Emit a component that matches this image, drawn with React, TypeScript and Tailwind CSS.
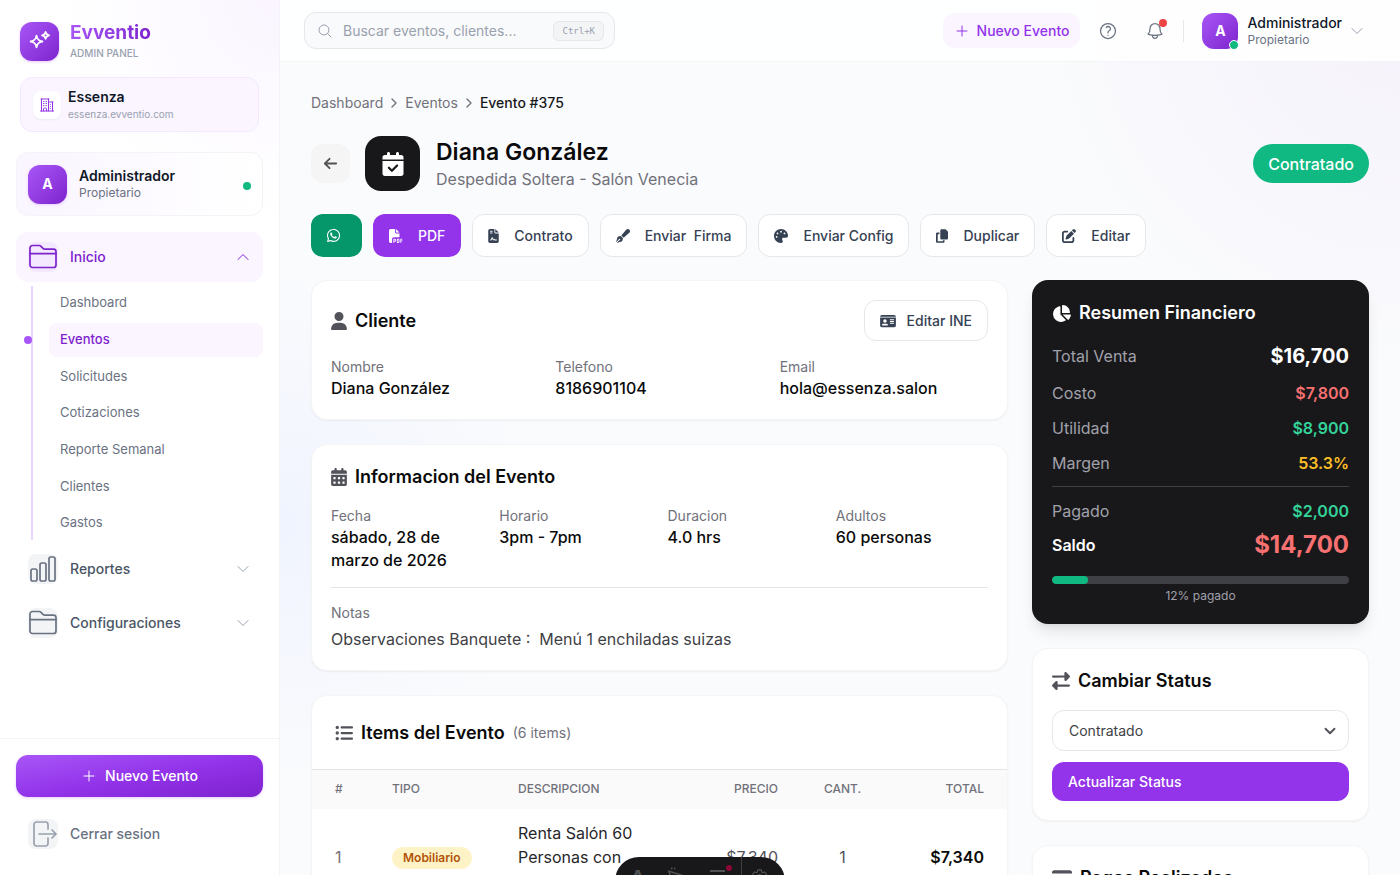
import React, { useState } from 'react';
import {
  FaArrowLeft,
  FaCalendarCheck,
  FaCalendarDays,
  FaChartPie,
  FaCopy,
  FaCreditCard,
  FaFileContract,
  FaFilePdf,
  FaIdCard,
  FaListUl,
  FaPalette,
  FaPenFancy,
  FaPenToSquare,
  FaRightLeft,
  FaUser,
  FaWhatsapp,
} from 'react-icons/fa6';
import {
  HiOutlineBell,
  HiOutlineBuildingOffice2,
  HiOutlineChevronDown,
  HiOutlineChevronUp,
  HiOutlineCog6Tooth,
  HiOutlineMagnifyingGlass,
  HiOutlinePlus,
  HiOutlineQuestionMarkCircle,
} from 'react-icons/hi2';
import { ChevronDown, ChevronRight } from 'lucide-react';

type Field = { label: string; value: string };
type Item = { id: number; type: string; description: string; price: string; qty: number; total: string };

const submenu = ['Dashboard', 'Eventos', 'Solicitudes', 'Cotizaciones', 'Reporte Semanal', 'Clientes', 'Gastos'];

const client: Field[] = [
  { label: 'Nombre', value: 'Diana González' },
  { label: 'Telefono', value: '8186901104' },
  { label: 'Email', value: 'hola@essenza.salon' },
];

const eventInfo: Field[] = [
  { label: 'Fecha', value: 'sábado, 28 de marzo de 2026' },
  { label: 'Horario', value: '3pm - 7pm' },
  { label: 'Duracion', value: '4.0 hrs' },
  { label: 'Adultos', value: '60 personas' },
];

const items: Item[] = [
  { id: 1, type: 'Mobiliario', description: 'Renta Salón 60 Personas con Banquete', price: '$7,340', qty: 1, total: '$7,340' },
];

const paidPercent = 12;

/* Icons that the icon sets do not have */

function LogoIcon() {
  return (
    <svg viewBox="0 0 24 24" className="size-6 text-white" fill="none" stroke="currentColor" strokeWidth="1.8" strokeLinejoin="round">
      <path d="M8.500 6.600c.7 3.900 2 5.200 5.900 5.900-3.900.7-5.200 2-5.900 5.900-.7-3.900-2-5.200-5.900-5.900 3.900-.7 5.200-2 5.900-5.900z" />
      <path d="M17.600 2.800c.4 2.300 1.200 3.100 3.500 3.500-2.300.4-3.100 1.200-3.500 3.500-.4-2.300-1.200-3.100-3.500-3.500 2.300-.4 3.100-1.200 3.500-3.500z" />
    </svg>
  );
}

function FolderIcon() {
  return (
    <svg viewBox="0 0 28 28" className="size-7 shrink-0" fill="none" stroke="currentColor" strokeWidth="1.7" strokeLinecap="round" strokeLinejoin="round">
      <path d="M1 22V5a2.500 2.500 0 0 1 2.500-2.500h6.700a2.500 2.500 0 0 1 1.800.8l2 2a2.500 2.500 0 0 0 1.800.8h8.700A2.500 2.500 0 0 1 27 8.600V22a2.500 2.500 0 0 1-2.500 2.500h-21A2.500 2.500 0 0 1 1 22z" />
      <path d="M1 10.700h26" />
    </svg>
  );
}

function BarsIcon() {
  return (
    <svg viewBox="0 0 28 28" className="size-7 shrink-0" fill="none" stroke="currentColor" strokeWidth="1.7">
      <rect x="2" y="14" width="6" height="12" rx="1.700" />
      <rect x="11" y="8" width="6" height="18" rx="1.700" />
      <rect x="20" y="2" width="6" height="24" rx="1.700" />
    </svg>
  );
}

function LogoutIcon() {
  return (
    <svg viewBox="0 0 28 28" className="size-7 shrink-0" fill="none" stroke="currentColor" strokeWidth="1.7" strokeLinecap="round" strokeLinejoin="round">
      <path d="M19 9V4.500A2.500 2.500 0 0 0 16.500 2h-9A2.500 2.500 0 0 0 5 4.500v19A2.500 2.500 0 0 0 7.500 26h9a2.500 2.500 0 0 0 2.500-2.500V18" />
      <path d="M10 14h17M23 10l4 4-4 4" />
    </svg>
  );
}

function ActionButton({ icon, label }: { icon: React.ReactNode; label: string }) {
  return (
    <button type="button" className="flex h-[43px] items-center gap-[15px] rounded-xl border border-gray-200 bg-white px-[15px] text-sm font-medium text-gray-700">
      {icon}
      <span className="whitespace-pre">{label}</span>
    </button>
  );
}

function FieldList({ fields }: { fields: Field[] }) {
  return (
    <>
      {fields.map((f) => (
        <div key={f.label}>
          <dt className="text-sm text-[#71717a]">{f.label}</dt>
          <dd className="text-base leading-[23px] font-medium text-neutral-950">{f.value}</dd>
        </div>
      ))}
    </>
  );
}

function SummaryRow({ label, value, color }: { label: string; value: string; color: string }) {
  return (
    <div className="flex h-6 items-center justify-between">
      <dt className="text-[#a1a1aa]">{label}</dt>
      <dd className={`font-semibold ${color}`}>{value}</dd>
    </div>
  );
}

function NavGroup({ icon, label }: { icon: React.ReactNode; label: string }) {
  return (
    <button type="button" className="flex h-[50px] w-full items-center gap-3 rounded-xl px-3 text-sm font-medium text-gray-600">
      <span className="flex size-[30px] items-center justify-center rounded-lg bg-gray-100 text-gray-500">{icon}</span>
      {label}
      <HiOutlineChevronDown className="ml-auto size-4 text-gray-400" />
    </button>
  );
}

function Sidebar() {
  return (
    <aside className="flex w-[280px] shrink-0 flex-col border-r border-gray-100 bg-white bg-[radial-gradient(circle_at_100%_0%,#faf5ff_0%,#ffffff_220px)]">
      <div className="flex items-center gap-[11px] px-5 pt-[21px]">
        <span className="flex size-[39px] items-center justify-center rounded-xl bg-linear-to-br from-[#a855f7] to-[#7e22ce] shadow-sm shadow-purple-200">
          <LogoIcon />
        </span>
        <div>
          <div className="bg-linear-to-r from-[#a855f7] to-[#7e22ce] bg-clip-text text-[19px] leading-6 font-bold text-transparent">Evventio</div>
          <div className="text-[10px] leading-4 font-medium text-gray-400">ADMIN PANEL</div>
        </div>
      </div>

      <div className="mx-5 mt-4 flex h-[55px] items-center gap-[7px] rounded-xl border border-purple-100 bg-purple-50 px-3">
        <span className="flex size-7 items-center justify-center rounded-lg bg-white text-[#9333ea] shadow-xs">
          <HiOutlineBuildingOffice2 className="size-4" />
        </span>
        <div>
          <div className="text-sm leading-[18px] font-semibold text-gray-900">Essenza</div>
          <div className="text-[10px] leading-4 text-gray-400">essenza.evventio.com</div>
        </div>
      </div>

      <div className="mx-4 mt-5 flex h-16 items-center gap-3 rounded-xl border border-gray-100 bg-linear-to-r from-purple-50 to-white px-[11px]">
        <span className="flex size-[39px] items-center justify-center rounded-xl bg-linear-to-br from-[#a855f7] to-[#7e22ce] text-sm font-bold text-white shadow-sm shadow-purple-200">A</span>
        <div>
          <div className="text-sm leading-[18px] font-semibold text-gray-900">Administrador</div>
          <div className="text-xs text-gray-500">Propietario</div>
        </div>
        <span className="mt-1 ml-auto size-2 rounded-full bg-[#10b981]" />
      </div>

      <nav className="mx-4 mt-4 flex flex-1 flex-col gap-1">
        <button type="button" className="flex h-[50px] w-full items-center gap-3 rounded-xl bg-purple-50 px-3 text-sm font-medium text-[#7e22ce]">
          <span className="flex size-[30px] items-center justify-center rounded-lg bg-purple-100 text-[#7e22ce]">
            <FolderIcon />
          </span>
          Inicio
          <HiOutlineChevronUp className="ml-auto size-4 text-[#7e22ce]" />
        </button>
        <ul className="ml-[15px] flex h-[254px] flex-col justify-between border-l-2 border-purple-200 pl-4">
          {submenu.map((name) => (
            <li key={name} className="relative">
              {name === 'Eventos' && <span className="absolute top-[13px] -left-[25px] size-2 rounded-full bg-[#a855f7]" />}
              <a
                href="#"
                className={`flex h-[34px] items-center rounded-lg px-[11px] text-[13px] ${name === 'Eventos' ? 'bg-purple-50 font-medium text-[#7e22ce]' : 'text-gray-500'}`}
              >
                {name}
              </a>
            </li>
          ))}
        </ul>
        <NavGroup icon={<BarsIcon />} label="Reportes" />
        <NavGroup icon={<FolderIcon />} label="Configuraciones" />
      </nav>

      <div className="border-t border-gray-100 px-4 pt-4 pb-4">
        <button type="button" className="flex h-[42px] w-full items-center justify-center gap-2 rounded-xl bg-linear-to-br from-[#a855f7] via-[#9333ea] to-[#7e22ce] text-sm font-medium text-white shadow-sm shadow-purple-200">
          <HiOutlinePlus className="size-4" />
          Nuevo Evento
        </button>
        <a href="#" className="mt-3 flex h-[50px] items-center gap-3 px-3 text-sm font-medium text-gray-500">
          <span className="flex size-[30px] items-center justify-center rounded-lg bg-gray-100 text-gray-400">
            <LogoutIcon />
          </span>
          Cerrar sesion
        </a>
      </div>
    </aside>
  );
}

function TopBar() {
  return (
    <header className="flex h-[62px] shrink-0 items-center border-b border-gray-100 bg-white/90 px-6">
      <label className="flex h-[37px] w-[311px] items-center gap-[10px] rounded-xl border border-gray-200 bg-gray-50 pr-[10px] pl-3">
        <HiOutlineMagnifyingGlass className="size-4 text-gray-400" />
        <span className="sr-only">Buscar</span>
        <input type="search" placeholder="Buscar eventos, clientes..." className="h-full min-w-0 flex-1 bg-transparent text-sm outline-none placeholder:text-gray-400" />
        <kbd className="rounded-md border border-gray-200 bg-gray-100 px-2 font-['DejaVu_Sans_Mono',monospace] text-[9px] leading-[18px] text-gray-400">Ctrl+K</kbd>
      </label>

      <div className="ml-auto flex items-center">
        <button type="button" className="flex h-[35px] items-center gap-[7px] rounded-xl bg-purple-50 px-[11px] text-sm font-medium text-[#9333ea]">
          <HiOutlinePlus className="size-4" />
          Nuevo Evento
        </button>
        <button type="button" aria-label="Ayuda" className="ml-[18px] text-gray-500">
          <HiOutlineQuestionMarkCircle className="size-5" />
        </button>
        <button type="button" aria-label="Notificaciones" className="relative ml-[27px] text-gray-500">
          <HiOutlineBell className="size-5" />
          <span className="absolute -top-[2px] -right-[2px] size-2 rounded-full bg-[#ef4444]" />
        </button>
        <span className="mx-[18px] h-[22px] w-px bg-gray-200" />
        <button type="button" className="flex items-center gap-[9px] pr-[11px] text-left">
          <span className="relative flex size-9 items-center justify-center rounded-xl bg-linear-to-br from-[#a855f7] to-[#7e22ce] text-sm font-bold text-white">
            A
            <span className="absolute -right-[1px] -bottom-[1px] size-[10px] rounded-full border border-white bg-[#10b981]" />
          </span>
          <span>
            <span className="block text-sm leading-[18px] font-medium text-gray-900">Administrador</span>
            <span className="block text-xs leading-[15px] text-gray-500">Propietario</span>
          </span>
          <HiOutlineChevronDown className="-ml-[2px] size-4 text-gray-400" />
        </button>
      </div>
    </header>
  );
}

export default function App() {
  const [status, setStatus] = useState('Contratado');

  return (
    <div className="flex h-screen overflow-hidden bg-[#fafbfd] font-['Inter','Liberation_Sans',sans-serif] text-neutral-950 antialiased">
      <Sidebar />

      <div className="flex min-w-0 flex-1 flex-col bg-[radial-gradient(circle_at_100%_0%,#f5f1fb_0%,transparent_360px),radial-gradient(circle_at_0%_60%,#f0f4fe_0%,transparent_260px)]">
        <TopBar />

        <main className="flex-1 overflow-y-auto px-[31px] pt-[31px] [scrollbar-width:none]">
          <nav aria-label="Ruta" className="flex items-center gap-[3px] text-sm text-[#71717a]">
            <a href="#">Dashboard</a>
            <ChevronRight className="size-4" />
            <a href="#">Eventos</a>
            <ChevronRight className="size-4" />
            <span className="font-medium text-[#18181b]">Evento #375</span>
          </nav>

          <div className="mt-[23px] flex items-center">
            <a href="#" aria-label="Volver" className="flex size-[39px] items-center justify-center rounded-xl bg-neutral-100 text-neutral-600">
              <FaArrowLeft className="size-[15px]" />
            </a>
            <span className="ml-[15px] flex size-[55px] items-center justify-center rounded-2xl bg-[#18181b] text-white">
              <FaCalendarCheck className="size-6" />
            </span>
            <div className="ml-4">
              <h1 className="text-[23px] leading-[30px] font-semibold">Diana González</h1>
              <p className="text-base leading-6 text-[#71717a]">Despedida Soltera - Salón Venecia</p>
            </div>
            <span className="ml-auto flex h-[39px] items-center rounded-full bg-[#10b981] px-[15px] text-base font-medium text-white">Contratado</span>
          </div>

          <div className="mt-[23px] flex flex-wrap gap-[11px]">
            <a href="#" aria-label="WhatsApp" className="flex h-[43px] w-[51px] items-center rounded-xl bg-[#059669] px-[15px] text-white">
              <FaWhatsapp className="size-[15px]" />
            </a>
            <button type="button" className="flex h-[43px] items-center gap-[15px] rounded-xl bg-[#9333ea] px-4 text-sm font-medium text-white">
              <FaFilePdf className="size-[14px]" />
              PDF
            </button>
            <ActionButton icon={<FaFileContract className="h-[14px] w-[11px]" />} label="Contrato" />
            <ActionButton icon={<FaPenFancy className="size-[14px]" />} label="Enviar  Firma" />
            <ActionButton icon={<FaPalette className="size-[14px]" />} label="Enviar Config" />
            <ActionButton icon={<FaCopy className="h-[14px] w-3" />} label="Duplicar" />
            <ActionButton icon={<FaPenToSquare className="size-[14px]" />} label="Editar" />
          </div>

          <div className="mt-[23px] flex items-start gap-6">
            <div className="flex min-w-0 flex-1 flex-col gap-6">
              <section className="rounded-2xl border border-neutral-100 bg-white p-[19px] shadow-xs">
                <div className="flex items-center justify-between">
                  <h2 className="flex items-center gap-2 text-lg leading-[26px] font-semibold">
                    <FaUser className="h-[18px] w-4 text-[#52525b]" />
                    Cliente
                  </h2>
                  <button type="button" className="flex h-[41px] items-center gap-[11px] rounded-xl border border-gray-200 bg-white px-[15px] text-sm font-medium text-gray-700">
                    <FaIdCard className="h-[14px] w-4" />
                    Editar INE
                  </button>
                </div>
                <dl className="mt-4 grid grid-cols-3 gap-4">
                  <FieldList fields={client} />
                </dl>
              </section>

              <section className="rounded-2xl border border-neutral-100 bg-white p-[19px] shadow-xs">
                <h2 className="flex items-center gap-2 text-lg leading-[26px] font-semibold">
                  <FaCalendarDays className="h-[18px] w-4 text-[#52525b]" />
                  Informacion del Evento
                </h2>
                <dl className="mt-4 grid grid-cols-4 gap-4">
                  <FieldList fields={eventInfo} />
                </dl>
                <div className="mt-[15px] border-t border-neutral-200 pt-[15px]">
                  <h3 className="text-sm text-[#71717a]">Notas</h3>
                  <p className="mt-1 text-base whitespace-pre-wrap text-[#3f3f46]">{'Observaciones Banquete :  Menú 1 enchiladas suizas'}</p>
                </div>
              </section>

              <section className="overflow-hidden rounded-2xl border border-neutral-100 bg-white shadow-xs">
                <h2 className="flex items-center gap-2 px-[23px] py-6 text-lg leading-[25px] font-semibold">
                  <FaListUl className="size-[18px] text-[#52525b]" />
                  Items del Evento
                  <span className="text-sm font-normal text-[#71717a]">(6 items)</span>
                </h2>
                <table className="w-full table-fixed border-t border-neutral-200">
                  <thead className="bg-neutral-50">
                    <tr className="h-[39px] text-left text-xs text-[#71717a]">
                      <th className="w-[57px] pl-[23px] font-medium">#</th>
                      <th className="w-[126px] px-[23px] font-medium">TIPO</th>
                      <th className="px-[23px] font-medium">DESCRIPCION</th>
                      <th className="w-[89px] pr-[23px] text-right font-medium">PRECIO</th>
                      <th className="w-[83px] text-center font-medium">CANT.</th>
                      <th className="w-[123px] px-[23px] text-right font-medium">TOTAL</th>
                    </tr>
                  </thead>
                  <tbody>
                    {items.map((item) => (
                      <tr key={item.id}>
                        <td className="pl-[23px] text-[#71717a]">{item.id}</td>
                        <td className="pl-[23px]">
                          <span className="inline-block rounded-full bg-[#fef3c7] px-[11px] py-[3px] text-xs font-semibold text-[#b45309]">{item.type}</span>
                        </td>
                        <td className="px-[23px] py-3 text-[#27272a]">{item.description}</td>
                        <td className="pr-[23px] text-right text-[#52525b]">{item.price}</td>
                        <td className="text-center text-[#52525b]">{item.qty}</td>
                        <td className="px-[23px] text-right font-semibold">{item.total}</td>
                      </tr>
                    ))}
                  </tbody>
                </table>
              </section>
            </div>

            <div className="flex w-[337px] shrink-0 flex-col gap-6">
              <section className="rounded-2xl bg-[#18181b] p-5 text-white shadow-lg">
                <h2 className="flex items-center gap-2 text-lg leading-[26px] font-semibold">
                  <FaChartPie className="size-[19px]" />
                  Resumen Financiero
                </h2>
                <dl className="mt-4 flex flex-col gap-[11px]">
                  <div className="flex h-7 items-center justify-between">
                    <dt className="text-[#a1a1aa]">Total Venta</dt>
                    <dd className="text-xl font-bold">$16,700</dd>
                  </div>
                  <SummaryRow label="Costo" value="$7,800" color="text-[#f87171]" />
                  <SummaryRow label="Utilidad" value="$8,900" color="text-[#34d399]" />
                  <SummaryRow label="Margen" value="53.3%" color="text-[#fbbf24]" />
                </dl>
                <dl className="mt-[11px] border-t border-[#3f3f46] pt-3">
                  <SummaryRow label="Pagado" value="$2,000" color="text-[#34d399]" />
                  <div className="mt-[6px] flex h-8 items-center justify-between">
                    <dt className="font-semibold">Saldo</dt>
                    <dd className="text-2xl font-bold text-[#f87171]">$14,700</dd>
                  </div>
                </dl>
                <div className="mt-[15px] h-2 overflow-hidden rounded-full bg-[#3f3f46]">
                  <div className="h-full rounded-full bg-[#10b981]" style={{ width: `${paidPercent}%` }} />
                </div>
                <p className="mt-1 text-center text-xs text-[#a1a1aa]">{paidPercent}% pagado</p>
              </section>

              <section className="rounded-2xl border border-neutral-100 bg-white p-[19px] shadow-xs">
                <h2 className="flex items-center gap-2 text-lg leading-[26px] font-semibold">
                  <FaRightLeft className="size-[18px] text-[#52525b]" />
                  Cambiar Status
                </h2>
                <div className="relative mt-4">
                  <select
                    aria-label="Status"
                    value={status}
                    onChange={(e) => setStatus(e.target.value)}
                    className="h-[41px] w-full appearance-none rounded-xl border border-gray-200 bg-white px-4 text-sm text-[#3f3f46]"
                  >
                    <option>Contratado</option>
                    <option>Cancelado</option>
                  </select>
                  <ChevronDown className="pointer-events-none absolute top-3 right-[10px] size-[18px] text-[#52525b]" strokeWidth={2.5} />
                </div>
                <button type="button" className="mt-[11px] h-[39px] w-full rounded-xl bg-[#9333ea] px-4 text-left text-sm font-medium text-white">
                  Actualizar Status
                </button>
              </section>

              <section className="rounded-2xl border border-neutral-100 bg-white p-[19px] shadow-xs">
                <h2 className="flex items-center gap-2 text-lg leading-[26px] font-semibold">
                  <FaCreditCard className="size-5 text-[#52525b]" />
                  Pagos Realizados
                </h2>
              </section>
            </div>
          </div>
        </main>
      </div>

      {/* Dock, mostly below the fold */}
      <div className="fixed -bottom-[30px] left-1/2 flex h-12 w-[170px] -translate-x-1/2 items-start rounded-3xl bg-[#18181b] px-4 pt-[10px] text-neutral-600">
        <span className="text-lg leading-5 font-bold">A</span>
        <svg viewBox="0 0 20 20" className="ml-[22px] size-5" fill="none" stroke="currentColor" strokeWidth="1.5">
          <path d="M6 0v2M9 0v2M3 4l13 4-9 9z" />
        </svg>
        <span className="relative mt-[3px] ml-6 h-[2px] w-4 bg-neutral-600">
          <span className="absolute -top-[5px] -right-[7px] size-[6px] rounded-full bg-rose-900" />
        </span>
        <span className="-mt-[10px] ml-4 h-12 w-px bg-neutral-700" />
        <HiOutlineCog6Tooth className="ml-2 size-5" />
      </div>
    </div>
  );
}
